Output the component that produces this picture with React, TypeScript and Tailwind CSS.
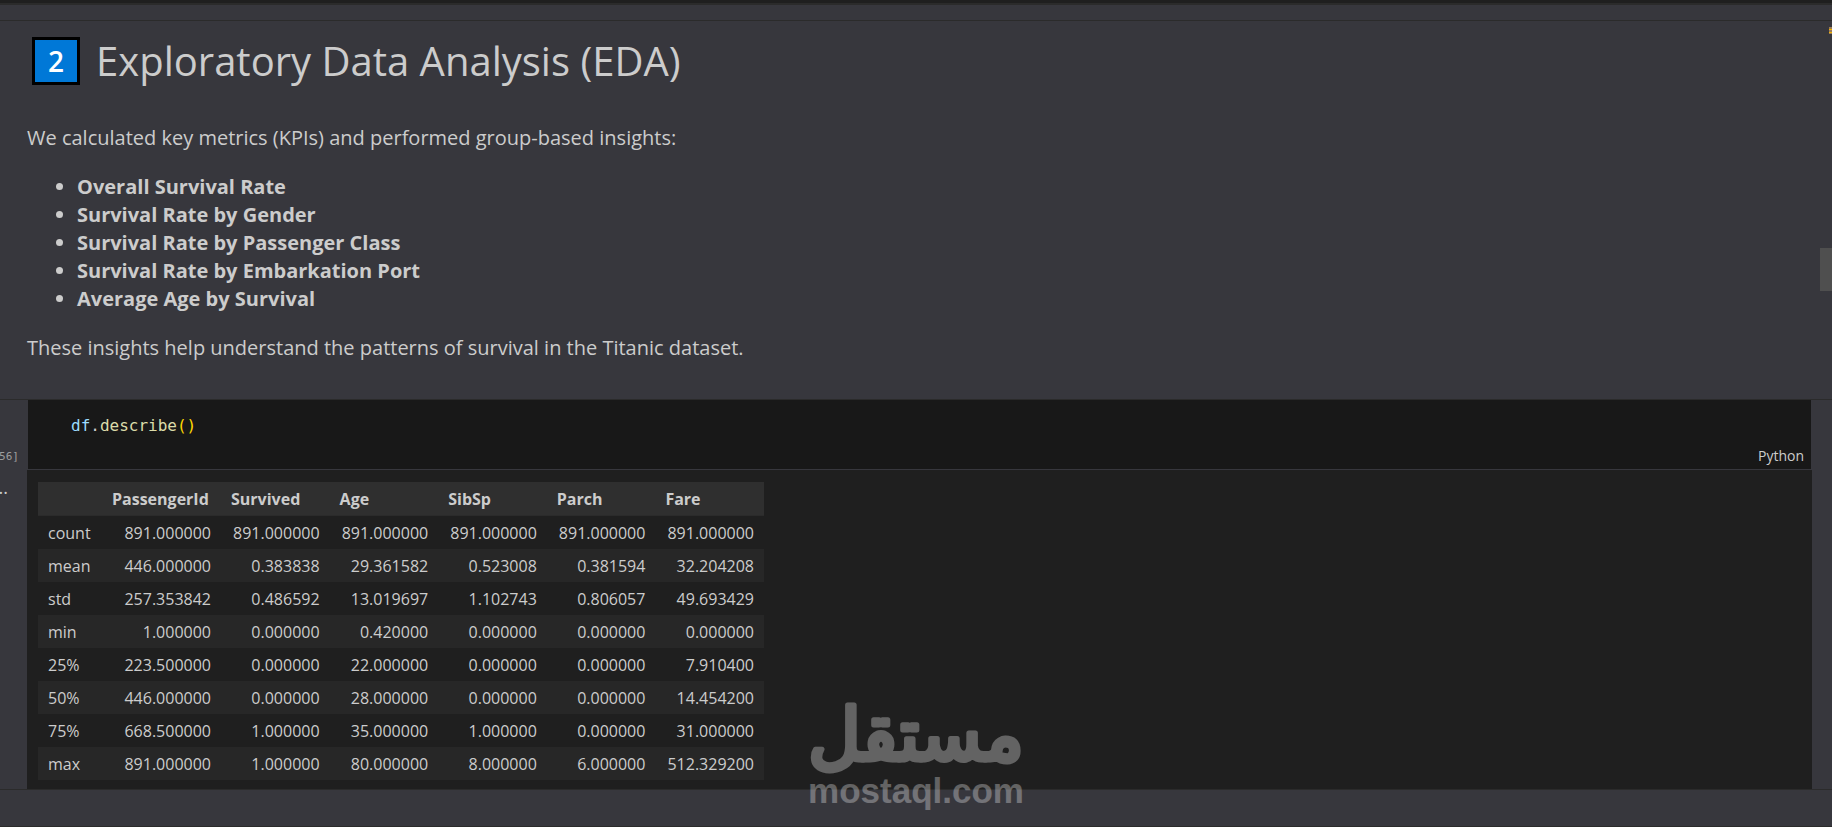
import React from 'react';

const insights = [
  'Overall Survival Rate',
  'Survival Rate by Gender',
  'Survival Rate by Passenger Class',
  'Survival Rate by Embarkation Port',
  'Average Age by Survival',
];

const columns = ['PassengerId', 'Survived', 'Age', 'SibSp', 'Parch', 'Fare'];

const rows: [string, string[]][] = [
  ['count', ['891.000000', '891.000000', '891.000000', '891.000000', '891.000000', '891.000000']],
  ['mean', ['446.000000', '0.383838', '29.361582', '0.523008', '0.381594', '32.204208']],
  ['std', ['257.353842', '0.486592', '13.019697', '1.102743', '0.806057', '49.693429']],
  ['min', ['1.000000', '0.000000', '0.420000', '0.000000', '0.000000', '0.000000']],
  ['25%', ['223.500000', '0.000000', '22.000000', '0.000000', '0.000000', '7.910400']],
  ['50%', ['446.000000', '0.000000', '28.000000', '0.000000', '0.000000', '14.454200']],
  ['75%', ['668.500000', '1.000000', '35.000000', '1.000000', '0.000000', '31.000000']],
  ['max', ['891.000000', '1.000000', '80.000000', '8.000000', '6.000000', '512.329200']],
];

const MarkdownCell: React.FC = () => (
  <section className="border-t border-[#2b2b2b] pl-[27px] pr-5 pt-3 pb-[37px] text-[20px] leading-7">
    <h1 className="flex items-center gap-4 text-[40px] leading-[56px]">
      <span className="ml-[5px] flex h-12 w-12 items-center justify-center border-3 border-black bg-[#0078d7] text-[28px] font-semibold text-white">
        2
      </span>
      Exploratory Data Analysis (EDA)
    </h1>
    <p className="mt-[35px]">We calculated key metrics (KPIs) and performed group-based insights:</p>
    <ul className="my-[21px] list-disc pl-[50px]">
      {insights.map((item) => (
        <li key={item}>
          <strong>{item}</strong>
        </li>
      ))}
    </ul>
    <p>These insights help understand the patterns of survival in the Titanic dataset.</p>
  </section>
);

const CodeInput: React.FC = () => (
  <div className="flex">
    <div className="flex w-7 shrink-0 items-end justify-end pr-[9px] pb-1 font-['DejaVu_Sans_Mono',monospace] text-[11px] leading-4 text-[#9d9d9d]">
      [56]
    </div>
    <div className="mr-[21px] flex grow flex-col bg-[#181818] pt-3 pb-px">
      <pre className="pl-[43px] font-['DejaVu_Sans_Mono',monospace] text-[16px] leading-[27px]">
        <span className="text-[#9cdcfe]">df</span>.<span className="text-[#dcdcaa]">describe</span>
        <span className="text-[#ffd700]">()</span>
      </pre>
      <button type="button" className="mt-[5px] self-end pr-[7px] text-[14px] leading-6">
        Python
      </button>
    </div>
  </div>
);

const CodeOutput: React.FC = () => (
  <div className="flex">
    <div className="flex w-[27px] shrink-0 justify-end pt-1.5 pr-[19px] text-[18px] leading-6">
      <span>...</span>
    </div>
    <div className="mr-5 grow border-t border-[#37373d] bg-[#1f1f1f] pt-3 pb-[9px] pl-[11px]">
      <table className="w-[726px] table-fixed border-collapse text-[16px] leading-[31px]">
        <colgroup>
          <col className="w-16" />
          <col className="w-[119px]" />
          <col span={5} />
        </colgroup>
        <thead>
          <tr className="border-b border-[#2b2b2b] bg-[#2f2f2f] text-left">
            <td />
            {columns.map((name) => (
              <th key={name} scope="col" className="px-[10px] pt-[2px]">
                {name}
              </th>
            ))}
          </tr>
        </thead>
        <tbody>
          {rows.map(([label, values]) => (
            <tr key={label} className="even:bg-[#272727]">
              <th scope="row" className="px-[10px] pt-[2px] text-left font-normal">
                {label}
              </th>
              {values.map((value, i) => (
                <td key={i} className="px-[10px] pt-[2px] text-right">
                  {value}
                </td>
              ))}
            </tr>
          ))}
        </tbody>
      </table>
    </div>
  </div>
);

const Watermark: React.FC = () => (
  <svg
    viewBox="0 0 240 120"
    className="pointer-events-none absolute top-[700px] left-1/2 h-[120px] w-60 -translate-x-1/2 overflow-visible fill-white opacity-30"
  >
    <text
      x="120"
      y="60"
      textAnchor="middle"
      fontSize="72"
      stroke="white"
      strokeWidth="5"
      strokeLinejoin="round"
      fontFamily="DejaVu Sans, sans-serif"
    >
      مستقل
    </text>
    <text
      x="120"
      y="103"
      textAnchor="middle"
      fontSize="35"
      fontWeight="700"
      fontFamily="Liberation Sans, sans-serif"
    >
      mostaql.com
    </text>
  </svg>
);

export default function App() {
  return (
    <div className="relative flex min-h-screen flex-col overflow-hidden bg-[#37373d] font-['Open_Sans',sans-serif] text-[#cccccc]">
      <div className="h-[5px] border-b-2 border-[#2b2b2b] bg-[#1f1f1f]" />
      <div className="h-[15px]" />
      <main>
        <MarkdownCell />
        <section className="border-y border-[#2b2b2b]">
          <CodeInput />
          <CodeOutput />
        </section>
      </main>
      <div className="min-h-9 grow border-b border-[#2b2b2b]" />
      <div className="absolute top-[248px] right-0 h-[43px] w-3 bg-[#4f4f4f]" />
      <div className="absolute top-[27px] right-0 flex h-[7px] w-[3px] flex-col gap-[2px] bg-[#9a7a55] pt-[2px]">
        <div className="h-px bg-[#f0b400]" />
        <div className="h-px bg-[#f0b400]" />
      </div>
      <Watermark />
    </div>
  );
}
